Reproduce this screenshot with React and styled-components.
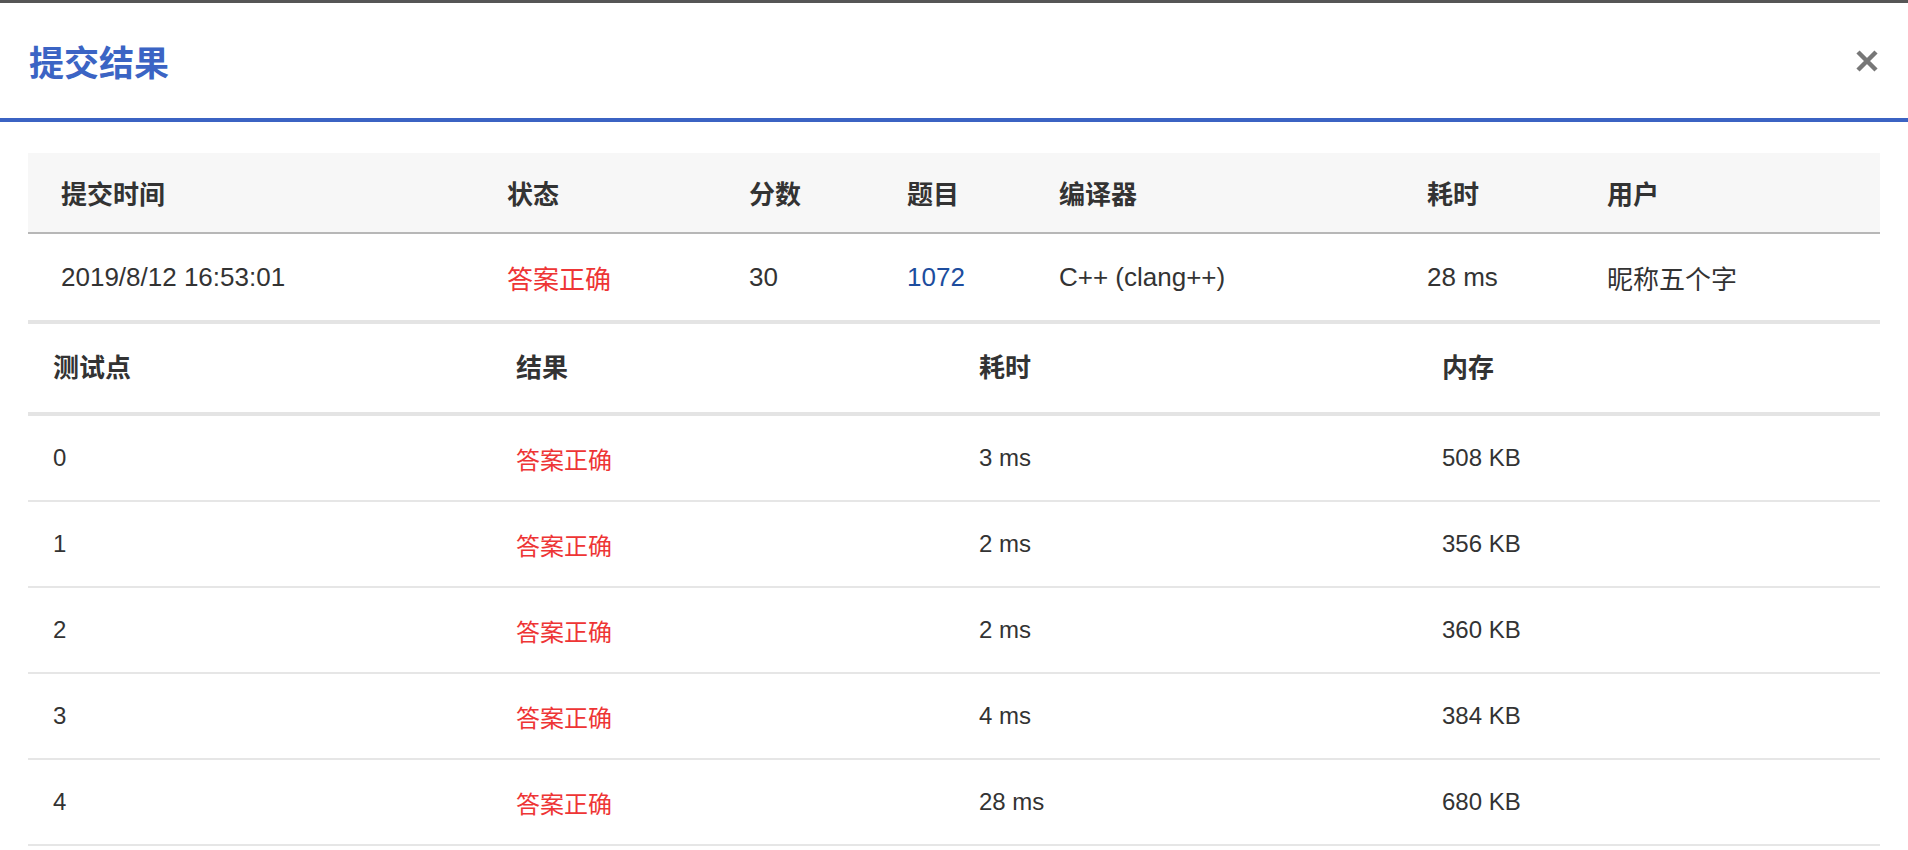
import React from 'react'
import styled, { createGlobalStyle } from 'styled-components'

const GlobalStyle = createGlobalStyle`
  body {
    margin: 0;
    background: #fff;
    font-family: "Liberation Sans", "Noto Sans CJK SC", sans-serif;
    color: #333;
  }
`

const Backdrop = styled.div`
  height: 3px;
  background: #565656;
`

const Header = styled.div`
  height: 115px;
  display: flex;
  align-items: center;
  justify-content: space-between;
  padding: 0 30px 0 29px;
  border-bottom: 4px solid #3b63c3;
`

const Title = styled.h4`
  margin: 0;
  font-size: 35px;
  font-weight: bold;
  color: #3b64c4;
  font-family: "Noto Sans CJK SC", sans-serif;
`

const Close = styled.button`
  border: 0;
  background: none;
  padding: 0;
  width: 22px;
  height: 22px;
  display: flex;
  cursor: pointer;
`

const Body = styled.div`
  padding: 31px 28px 0;
`

const Row = styled.div`
  display: grid;
  grid-template-columns: ${p => p.$cols};
  align-items: center;
  height: ${p => p.$h}px;
  padding-bottom: ${p => p.$lift || 0}px;
  background: ${p => p.$bg || 'transparent'};
  border-bottom: ${p => p.$border};
`

const Cell = styled.div`
  padding-left: ${p => p.$pad}px;
  font-size: ${p => p.$size || 26}px;
  font-weight: ${p => (p.$head ? 'bold' : 'normal')};
  color: ${p => p.$color || '#333'};
  white-space: nowrap;
`

const Link = styled.a`
  color: #1d4d9e;
  text-decoration: none;
`

const summaryCols = '446px 242px 158px 152px 368px 180px 1fr'
const caseCols = 'repeat(4, 1fr)'
const RED = '#ee3535'

const summaryHead = ['提交时间', '状态', '分数', '题目', '编译器', '耗时', '用户']

const cases = [
  { id: 0, time: '3 ms', mem: '508 KB' },
  { id: 1, time: '2 ms', mem: '356 KB' },
  { id: 2, time: '2 ms', mem: '360 KB' },
  { id: 3, time: '4 ms', mem: '384 KB' },
  { id: 4, time: '28 ms', mem: '680 KB' },
]

const CloseIcon = () => (
  <svg width="22" height="22" viewBox="0 0 22 22">
    <path d="M2 2 L20 20 M20 2 L2 20" stroke="#777" strokeWidth="4.5" strokeLinecap="butt" />
  </svg>
)

const App = () => {
  return (
    <>
      <GlobalStyle />
      <Backdrop />
      <Header>
        <Title>提交结果</Title>
        <Close aria-label="close"><CloseIcon /></Close>
      </Header>
      <Body>
        <Row $cols={summaryCols} $h={79} $bg="#f7f7f7" $border="2px solid #b7b7b7">
          {summaryHead.map(h => <Cell key={h} $pad={33} $head>{h}</Cell>)}
        </Row>
        <Row $cols={summaryCols} $h={86} $border="4px solid #e4e4e4">
          <Cell $pad={33}>2019/8/12 16:53:01</Cell>
          <Cell $pad={33} $color={RED}>答案正确</Cell>
          <Cell $pad={33}>30</Cell>
          <Cell $pad={33}><Link href="#">1072</Link></Cell>
          <Cell $pad={33}>C++ (clang++)</Cell>
          <Cell $pad={33}>28 ms</Cell>
          <Cell $pad={33}>昵称五个字</Cell>
        </Row>
        <Row $cols={caseCols} $h={82} $lift={6} $border="4px solid #e4e4e4">
          <Cell $pad={25} $head>测试点</Cell>
          <Cell $pad={25} $head>结果</Cell>
          <Cell $pad={25} $head>耗时</Cell>
          <Cell $pad={25} $head>内存</Cell>
        </Row>
        {cases.map(c => (
          <Row key={c.id} $cols={caseCols} $h={84} $border="2px solid #e6e6e6">
            <Cell $pad={25} $size={24}>{c.id}</Cell>
            <Cell $pad={25} $size={24} $color={RED}>答案正确</Cell>
            <Cell $pad={25} $size={24}>{c.time}</Cell>
            <Cell $pad={25} $size={24}>{c.mem}</Cell>
          </Row>
        ))}
      </Body>
    </>
  )
}

export default App
